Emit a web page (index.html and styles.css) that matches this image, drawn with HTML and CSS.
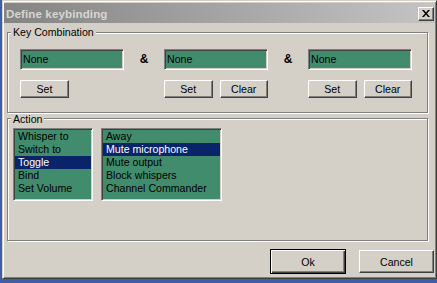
FILE: index.html
```html
<!DOCTYPE html>
<html>
<head>
<meta charset="utf-8">
<link rel="stylesheet" href="styles.css">
</head>
<body>
<div class="window">
  <div class="titlebar">
    <span class="title">Define keybinding</span>
    <button class="close" aria-label="Close"><svg width="8" height="7" viewBox="0 0 8 7"><path d="M0 0h2l2 2.5L6 0h2L5 3.5 8 7H6L4 4.5 2 7H0l3-3.5z" fill="#000"/></svg></button>
  </div>
  <div class="content">
    <div class="group group-keys">
      <div class="group-label">Key Combination</div>
      <div class="keys-grid">
        <div class="edit">None</div>
        <div class="amp">&amp;</div>
        <div class="edit">None</div>
        <div class="amp">&amp;</div>
        <div class="edit">None</div>
        <div class="btns"><button class="btn btn-sm">Set</button></div>
        <div></div>
        <div class="btns"><button class="btn btn-sm">Set</button><button class="btn btn-sm">Clear</button></div>
        <div></div>
        <div class="btns"><button class="btn btn-sm">Set</button><button class="btn btn-sm">Clear</button></div>
      </div>
    </div>
    <div class="group group-action">
      <div class="group-label">Action</div>
      <div class="lists">
        <ul class="list list-type">
          <li>Whisper to</li>
          <li>Switch to</li>
          <li class="sel">Toggle</li>
          <li>Bind</li>
          <li>Set Volume</li>
        </ul>
        <ul class="list list-action">
          <li>Away</li>
          <li class="sel">Mute microphone</li>
          <li>Mute output</li>
          <li>Block whispers</li>
          <li>Channel Commander</li>
        </ul>
      </div>
    </div>
    <div class="footer">
      <button class="btn btn-lg btn-default">Ok</button>
      <button class="btn btn-lg">Cancel</button>
    </div>
  </div>
</div>
</body>
</html>
```
FILE: styles.css
```css
html, body {
  margin: 0;
  padding: 0;
}
body {
  background: #3d5fa5;
  width: 437px;
  height: 283px;
  overflow: hidden;
  font-family: "Liberation Sans", Arial, sans-serif;
  font-size: 10.6px;
  color: #000;
}
.window {
  margin-left: 2px;
  width: 435px;
  height: 279px;
  box-sizing: border-box;
  background: #d4d0c8;
  border: 1px solid;
  border-color: #d4d0c8 #404040 #404040 #d4d0c8;
  box-shadow: inset 1px 1px #fff, inset -1px -1px #808080;
  padding: 2px 1px 1px 1px;
}
.titlebar {
  height: 20px;
  display: flex;
  align-items: center;
  justify-content: space-between;
  background: linear-gradient(to right, #848484, #c4c4c4);
  padding: 0 1px 0 2px;
}
.title {
  font-weight: bold;
  font-size: 11.6px;
  color: #d8d6d0;
  letter-spacing: 0.1px;
}
.close {
  width: 16px;
  height: 14px;
  padding: 0;
  margin: 1px 0 0 0;
  background: #d4d0c8;
  border: 1px solid;
  border-color: #fff #404040 #404040 #fff;
  box-shadow: inset -1px -1px #808080;
  display: flex;
  align-items: center;
  justify-content: center;
}
.close svg {
  display: block;
}
.content {
  padding: 0 1px 0 3px;
}
.group {
  box-sizing: border-box;
  width: 421px;
  border: 1px solid #808080;
  box-shadow: inset 1px 1px #fff, 1px 1px #fff;
}
.group-keys {
  margin-top: 9px;
  height: 81px;
}
.group-action {
  margin-top: 5px;
  height: 123px;
}
.group-label {
  width: fit-content;
  line-height: 11px;
  height: 11px;
  padding: 0 2px;
  margin: -6px 0 0 3px;
  background: #d4d0c8;
}
.group-action .group-label {
  margin-top: -5px;
}
.keys-grid {
  display: grid;
  grid-template-columns: 104px 40px 104px 40px 104px;
  grid-template-rows: 21px 18px;
  row-gap: 10px;
  margin: 11px 0 0 12px;
}
.edit {
  box-sizing: border-box;
  background: #408c6c;
  border: 1px solid;
  border-color: #808080 #fff #fff #808080;
  box-shadow: inset 1px 1px #404040, inset -1px -1px #d4d0c8;
  padding: 0 2px;
  line-height: 19px;
}
.amp {
  font-weight: bold;
  font-size: 12px;
  text-align: center;
  line-height: 21px;
}
.btns {
  display: flex;
  gap: 7px;
}
.btn {
  box-sizing: border-box;
  font-family: inherit;
  font-size: inherit;
  color: #000;
  background: #d4d0c8;
  border: 1px solid;
  border-color: #fff #404040 #404040 #fff;
  box-shadow: inset -1px -1px #808080;
  padding: 0;
  margin: 0;
  text-align: center;
}
.btn-sm {
  width: 49px;
  height: 18px;
  line-height: 15px;
}
.lists {
  display: flex;
  gap: 8px;
  margin: 3px 0 0 5px;
}
.list {
  list-style: none;
  margin: 0;
  box-sizing: border-box;
  height: 73px;
  padding: 1px 0 0 0;
  background: #408c6c;
  border: 1px solid;
  border-color: #808080 #fff #fff #808080;
  box-shadow: inset 1px 1px #404040, inset -1px -1px #d4d0c8;
}
.list li {
  height: 13px;
  line-height: 13px;
  padding: 0 3px;
  margin: 0 1px;
  white-space: nowrap;
}
.list li.sel {
  background: #0a246a;
  color: #fff;
}
.list-type {
  width: 80px;
}
.list-action {
  width: 121px;
}
.footer {
  display: flex;
  justify-content: flex-end;
  align-items: center;
  gap: 13px;
  margin-top: 8px;
  padding-right: 0;
}
.btn-lg {
  width: 75px;
  height: 23px;
}
.btn-default {
  height: 25px;
  width: 76px;
  border: 1px solid #000;
  box-shadow: inset 1px 1px #fff, inset -1px -1px #404040, inset -2px -2px #808080;
}
```
